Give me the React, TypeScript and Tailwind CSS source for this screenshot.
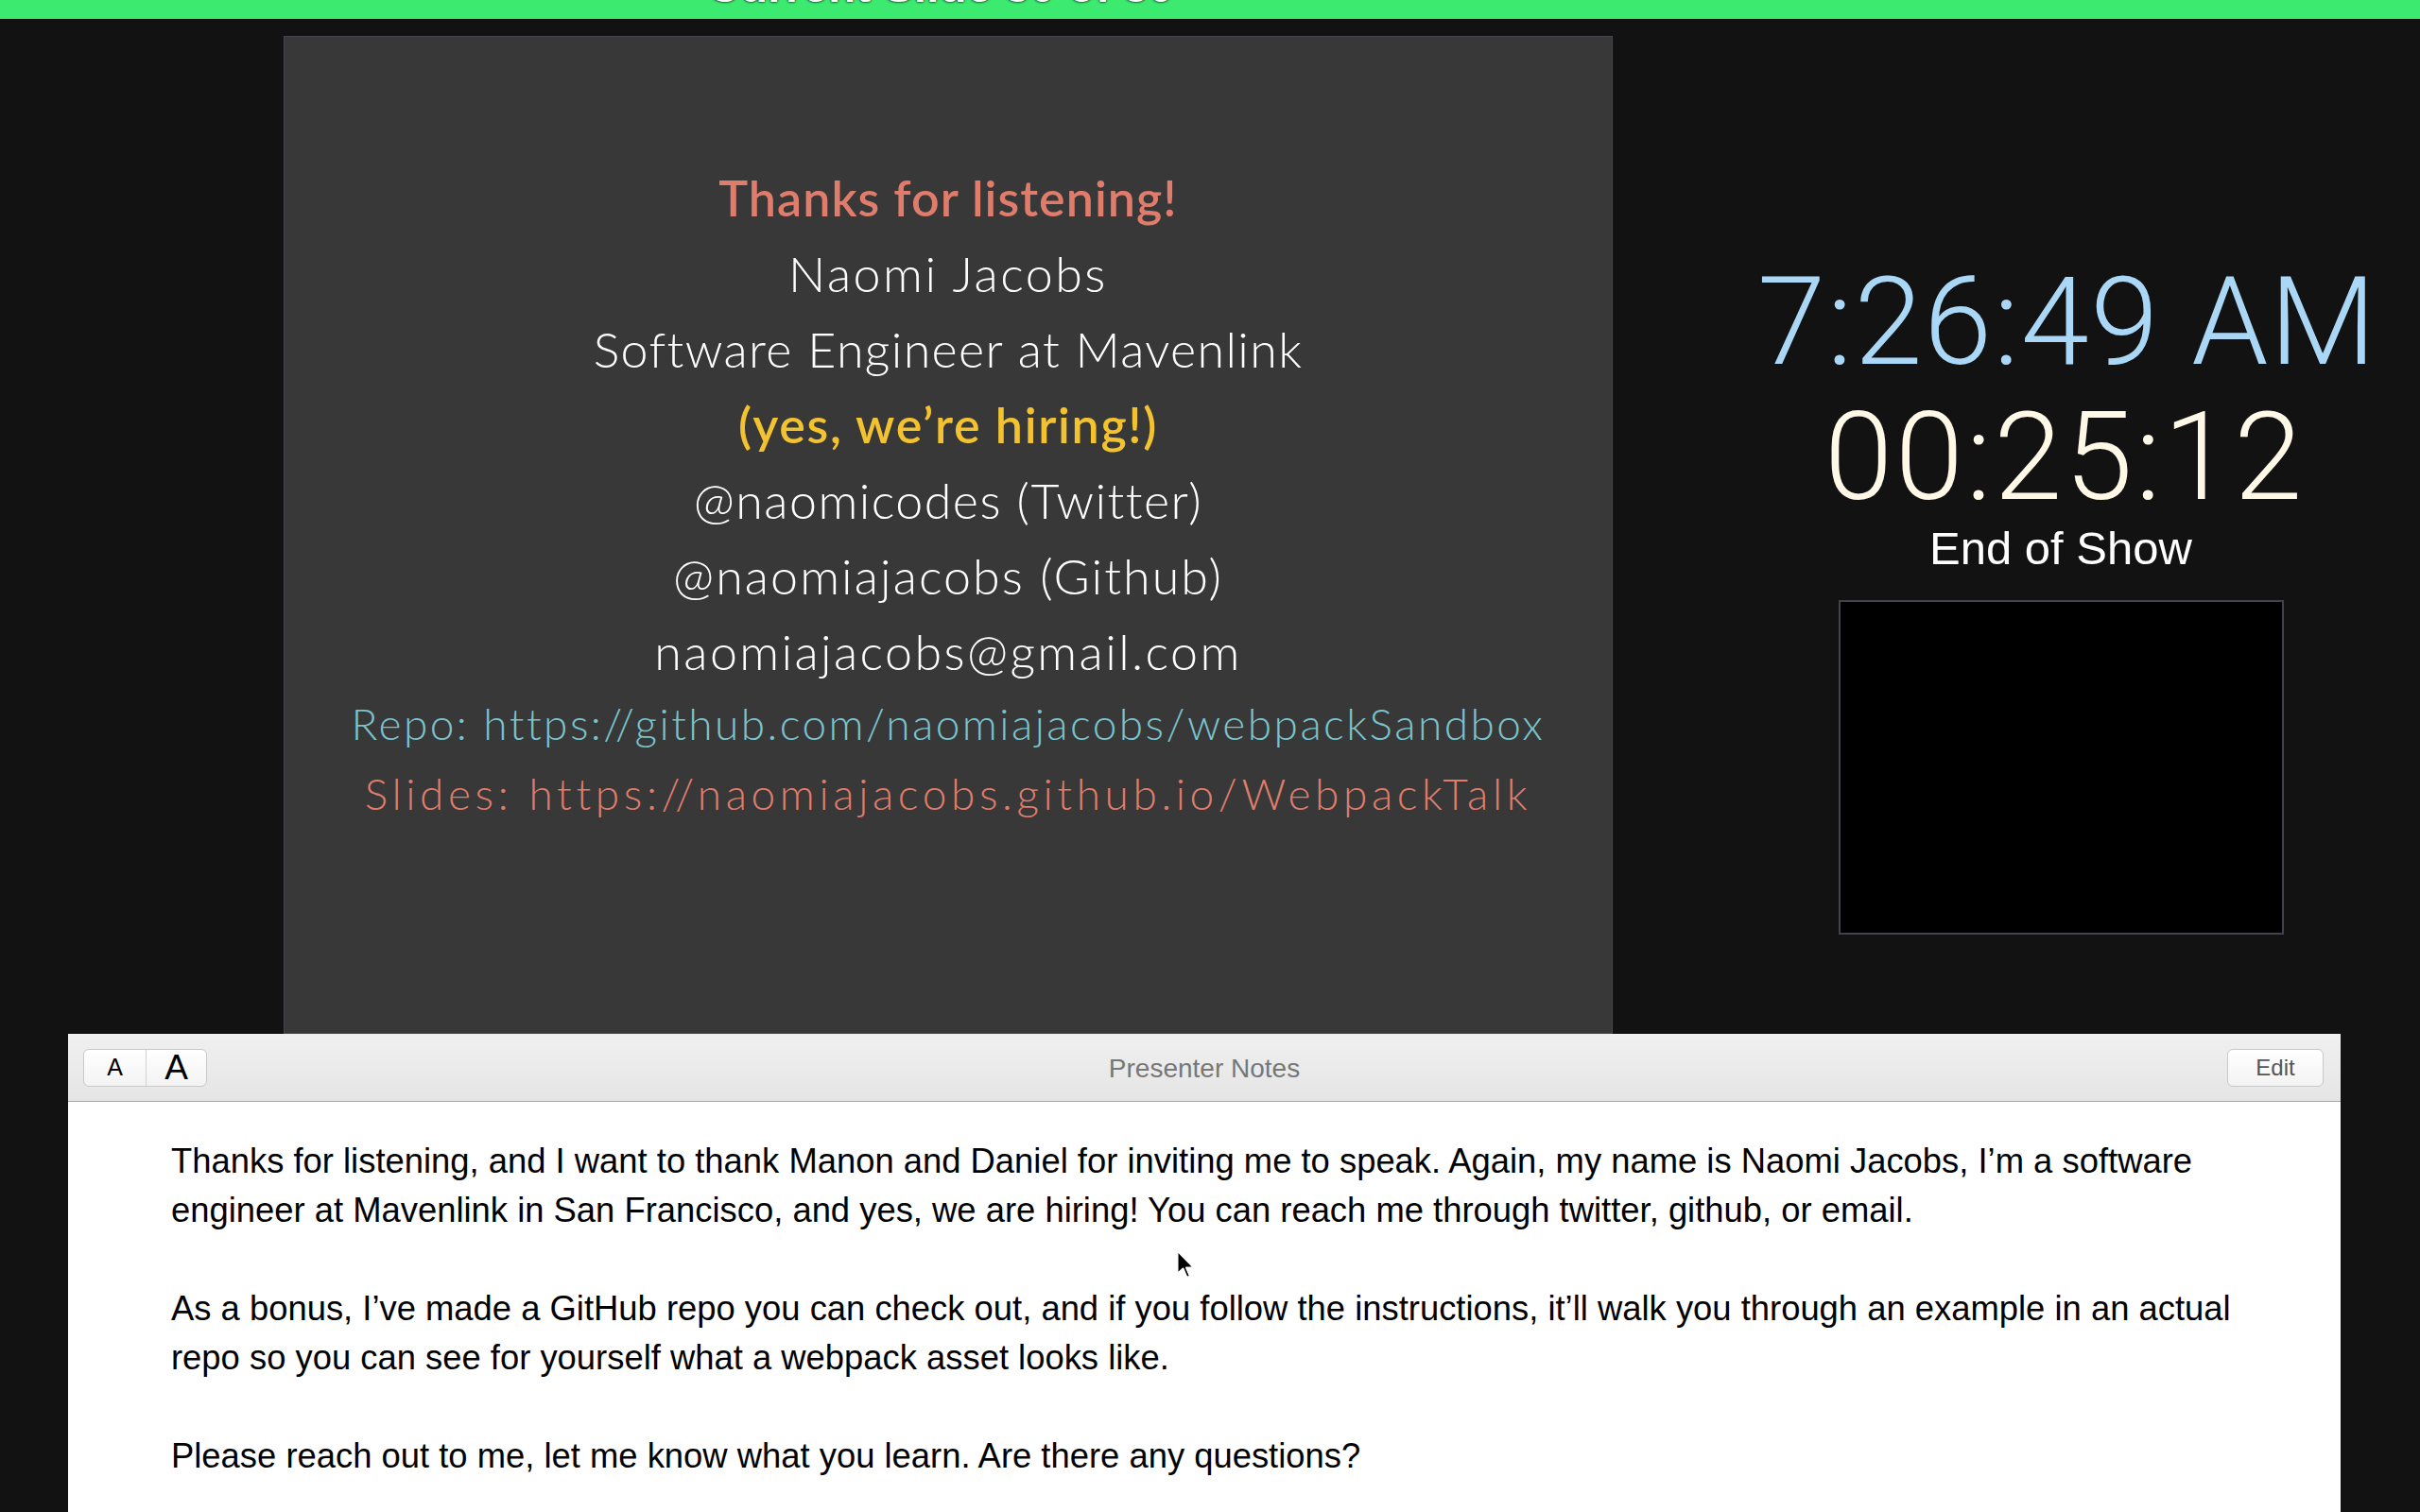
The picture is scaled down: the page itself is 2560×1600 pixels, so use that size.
import React from 'react'

const slideFont = { fontFamily: '"Avenir Next", Lato, "Noto Sans", sans-serif' }

export default function App() {
  const contacts = [
    { text: '@naomicodes (Twitter)', track: 'tracking-[0.028em]' },
    { text: '@naomiajacobs (Github)', track: 'tracking-[0.04em]' },
    { text: 'naomiajacobs@gmail.com', track: 'tracking-[0.046em]' },
  ]

  return (
    <div className="relative w-[2560px] h-[1600px] overflow-hidden bg-[#121212] font-['Liberation_Sans',Arial,sans-serif]">
      {/* Status bar */}
      <div className="h-[20px] bg-[#3bea6e] overflow-hidden pl-[748px]">
        <div className="mt-[-38px] text-[48px] leading-none font-bold text-white [text-shadow:0_0_3px_#000,0_0_1px_#000] whitespace-nowrap">
          Current Slide 30 of 30
        </div>
      </div>

      <div className="flex pt-[18px]">
        {/* Current slide */}
        <div
          className="ml-[300px] w-[1406px] h-[1056px] shrink-0 bg-[#383838] border border-[#46464e] flex flex-col items-center pt-[130px] text-[52px] text-white whitespace-nowrap"
          style={slideFont}
        >
          <div className="leading-[80px] font-semibold tracking-[0.02em] text-[#df7c6b]">Thanks for listening!</div>
          <div className="leading-[80px] font-light tracking-[0.048em]">Naomi Jacobs</div>
          <div className="leading-[80px] font-light tracking-[0.026em]">Software Engineer at Mavenlink</div>
          <div className="leading-[80px] font-semibold tracking-[0.032em] text-[#f2c230]">(yes, we’re hiring!)</div>
          {contacts.map((c) => (
            <div key={c.text} className={`leading-[80px] font-light ${c.track}`}>
              {c.text}
            </div>
          ))}
          <div className="leading-[74px] text-[46px] font-light tracking-[0.053em] text-[#79c3cd]">
            Repo: https://github.com/naomiajacobs/webpackSandbox
          </div>
          <div className="leading-[74px] text-[46px] font-light tracking-[0.1em] text-[#df7c6b]">
            Slides: https://naomiajacobs.github.io/WebpackTalk
          </div>
        </div>

        {/* Clock + timer */}
        <div className="ml-[94px] w-[760px] flex flex-col items-center pt-[238px]">
          <div className="ml-[14px] text-[130px] leading-none font-light tracking-[0.012em] text-[#a9d7f5] whitespace-nowrap font-['Helvetica_Neue',Roboto,sans-serif]">
            7:26:49 AM
          </div>
          <div className="ml-[8px] mt-[13px] text-[130px] leading-none font-light tracking-[0.02em] text-[#fff8e7] whitespace-nowrap font-['Helvetica_Neue',Roboto,sans-serif]">
            00:25:12
          </div>
          <div className="mt-[7px] text-[49px] leading-none text-white">End of Show</div>
          <div className="mt-[30px] w-[471px] h-[354px] bg-black border-2 border-[#43434b]" />
        </div>
      </div>

      {/* Presenter notes */}
      <div className="ml-[72px] w-[2404px] h-[520px] bg-white">
        <div className="relative h-[72px] bg-gradient-to-b from-[#f0f0f0] to-[#e5e5e5] border-b border-[#a6a6a6] flex items-center justify-between pl-[16px] pr-[18px]">
          <div className="flex h-[40px] rounded-[6px] border border-[#c9c9c9] bg-gradient-to-b from-white to-[#f3f3f3] overflow-hidden">
            <button className="w-[66px] flex items-center justify-center text-[25px] leading-none text-black border-r border-[#d2d2d2]">
              A
            </button>
            <button className="w-[63px] flex items-center justify-center text-[37px] leading-none text-black">A</button>
          </div>
          <div className="absolute left-0 right-0 top-[21px] text-center text-[28px] leading-[32px] text-[#777777] pointer-events-none">
            Presenter Notes
          </div>
          <button className="w-[102px] h-[40px] rounded-[6px] border border-[#c9c9c9] bg-gradient-to-b from-white to-[#f3f3f3] text-[24px] text-[#555555]">
            Edit
          </button>
        </div>

        <div className="pl-[109px] pt-[37px] text-[36.4px] leading-[52px] text-black whitespace-nowrap">
          <p>
            Thanks for listening, and I want to thank Manon and Daniel for inviting me to speak. Again, my name is Naomi
            Jacobs, I’m a software
            <br />
            engineer at Mavenlink in San Francisco, and yes, we are hiring! You can reach me through twitter, github, or
            email.
          </p>
          <p className="mt-[52px]">
            As a bonus, I’ve made a GitHub repo you can check out, and if you follow the instructions, it’ll walk you
            through an example in an actual
            <br />
            repo so you can see for yourself what a webpack asset looks like.
          </p>
          <p className="mt-[52px]">Please reach out to me, let me know what you learn. Are there any questions?</p>
        </div>
      </div>

      {/* Mouse pointer */}
      <svg className="absolute left-[1244px] top-[1322px]" width="22" height="33" viewBox="0 0 22 33">
        <path
          d="M1.5 1.5 L1.5 26 L7.5 20.5 L11.5 30 L15 28.5 L11 19.5 L19 19.5 Z"
          fill="#000"
          stroke="#fff"
          strokeWidth="2"
          strokeLinejoin="round"
        />
      </svg>
    </div>
  )
}
